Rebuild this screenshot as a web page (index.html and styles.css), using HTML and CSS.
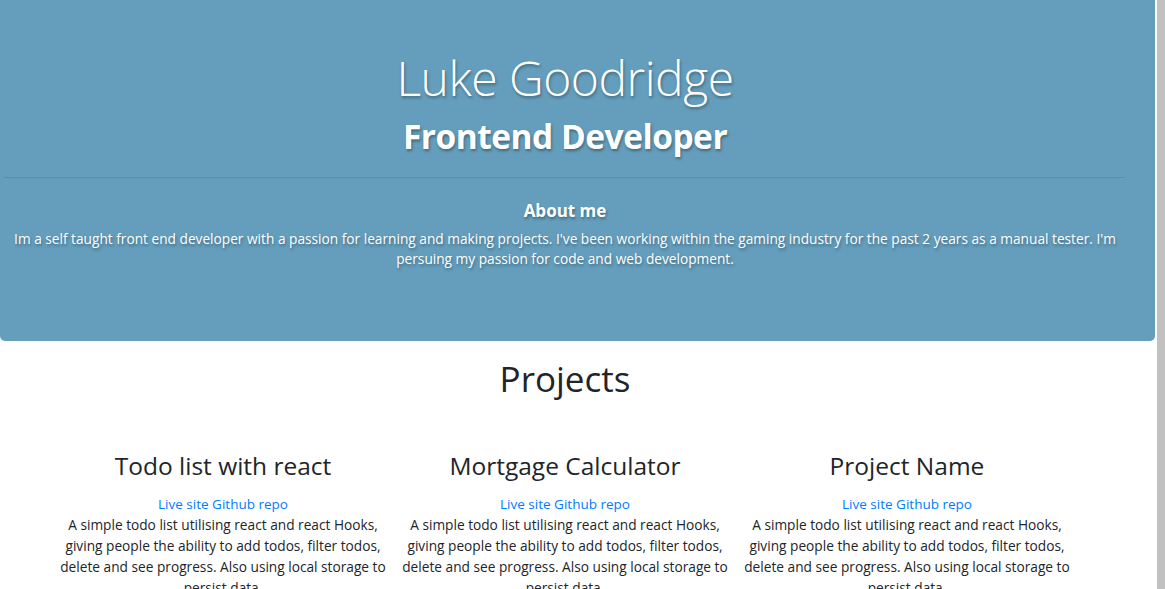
FILE: index.html
```html
<!DOCTYPE html>
<html lang="en">
<head>
<meta charset="utf-8">
<title>Luke Goodridge</title>
<link rel="stylesheet" href="styles.css">
</head>
<body>
<div class="page">
  <header class="hero">
    <div class="hero-inner">
      <h1 class="name">Luke Goodridge</h1>
      <h2 class="role">Frontend Developer</h2>
      <hr class="divider">
      <h3 class="about-title">About me</h3>
      <p class="about-text">Im a self taught front end developer with a passion for learning and making projects. I've been working within the gaming industry for the past 2 years as a manual tester. I'm persuing my passion for code and web development.</p>
    </div>
  </header>
  <main class="projects">
    <h2 class="projects-title">Projects</h2>
    <div class="project-grid">
      <section class="project">
        <h3 class="project-name">Todo list with react</h3>
        <div class="project-links"><a href="#">Live site</a> <a href="#">Github repo</a></div>
        <p class="project-desc">A simple todo list utilising react and react Hooks, giving people the ability to add todos, filter todos, delete and see progress. Also using local storage to persist data.</p>
      </section>
      <section class="project">
        <h3 class="project-name">Mortgage Calculator</h3>
        <div class="project-links"><a href="#">Live site</a> <a href="#">Github repo</a></div>
        <p class="project-desc">A simple todo list utilising react and react Hooks, giving people the ability to add todos, filter todos, delete and see progress. Also using local storage to persist data.</p>
      </section>
      <section class="project">
        <h3 class="project-name">Project Name</h3>
        <div class="project-links"><a href="#">Live site</a> <a href="#">Github repo</a></div>
        <p class="project-desc">A simple todo list utilising react and react Hooks, giving people the ability to add todos, filter todos, delete and see progress. Also using local storage to persist data.</p>
      </section>
    </div>
  </main>
</div>
<div class="scrollbar"></div>
</body>
</html>
```

FILE: styles.css
```css
html, body {
  margin: 0;
  padding: 0;
  overflow: hidden;
  background: #fff;
}
body {
  font-family: "Open Sans", "Noto Sans", sans-serif;
  color: #212529;
}
.page {
  width: 1155px;
}
.hero {
  background: #649ebc;
  border-radius: 0 0 5px 5px;
  height: 341px;
  box-sizing: border-box;
  padding-top: 48px;
}
.hero-inner {
  width: 1130px;
  text-align: center;
  color: #fff;
  text-shadow: 1px 2px 3px rgba(0, 0, 0, 0.35);
}
.name {
  margin: 0;
  font-weight: 300;
  font-size: 48px;
  line-height: 60px;
  letter-spacing: -0.5px;
}
.role {
  margin: 4px 0 0;
  font-weight: 700;
  font-size: 33.5px;
  line-height: 48px;
  letter-spacing: -0.5px;
}
.divider {
  margin: 17px 5px 0 4px;
  border: 0;
  border-top: 1px solid #5a8fab;
  width: 1121px;
}
.about-title {
  margin: 21px 0 0;
  font-size: 17px;
  font-weight: 700;
  line-height: 24px;
}
.about-text {
  margin: 6px auto 0;
  width: 1110px;
  font-size: 13.7px;
  line-height: 20px;
}
.projects {
  width: 1130px;
  text-align: center;
}
.projects-title {
  margin: 14px 0 0;
  font-size: 35px;
  font-weight: 500;
  line-height: 48px;
}
.project-grid {
  display: grid;
  grid-template-columns: repeat(3, 342px);
  justify-content: center;
  margin-top: 46px;
}
.project {
  padding: 0 4px;
}
.project-name {
  margin: 0;
  font-size: 24.5px;
  font-weight: 500;
  line-height: 34px;
}
.project-links {
  margin-top: 11px;
  font-size: 13.5px;
  line-height: 20px;
}
.project-links a {
  color: #007bff;
  text-decoration: none;
}
.project-desc {
  margin: 0;
  font-size: 13.7px;
  line-height: 21px;
}
.scrollbar {
  position: fixed;
  top: 0;
  right: 0;
  bottom: 0;
  width: 8px;
  background: #c1c1c1;
}
```
